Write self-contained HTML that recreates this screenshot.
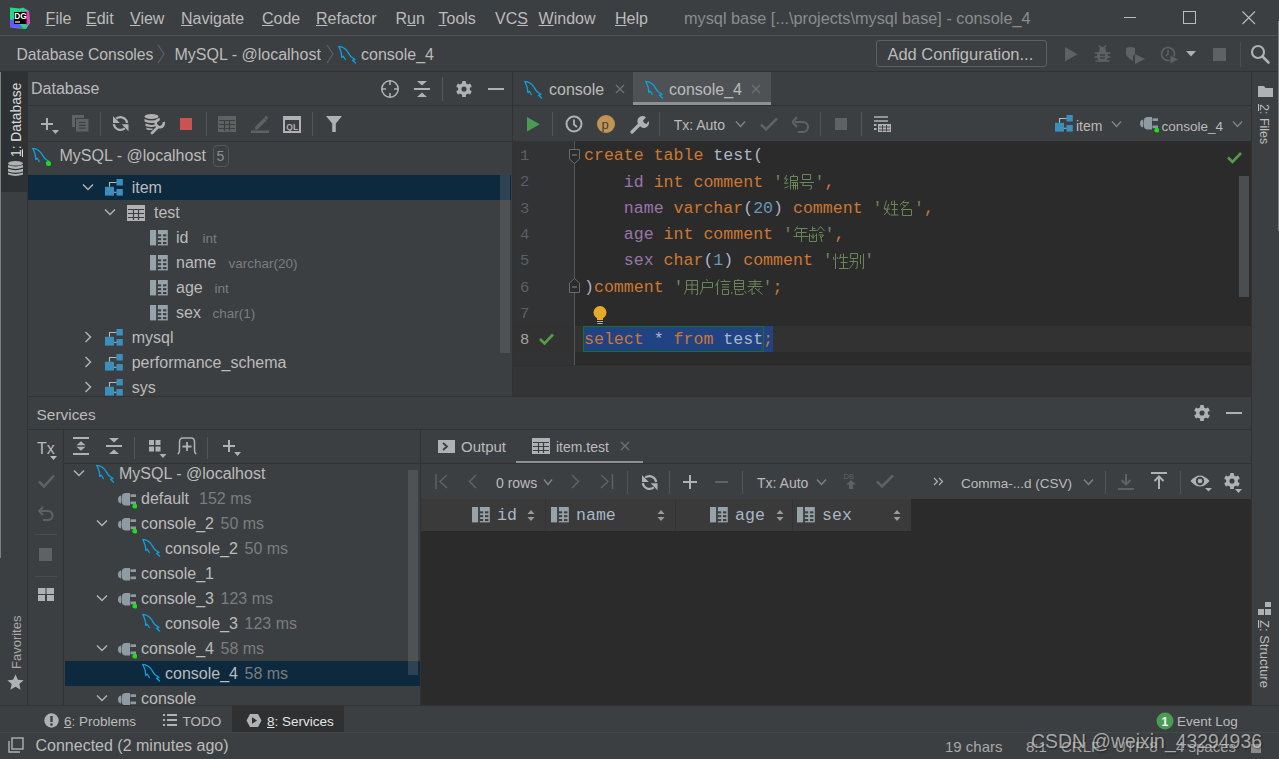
<!DOCTYPE html><html><head><meta charset="utf-8"><style>
html,body{margin:0;padding:0;width:1279px;height:759px;overflow:hidden;background:#3c3f41}
body>div,body>span,body>svg{position:absolute;display:block}
span{white-space:nowrap;line-height:1}
span span{white-space:inherit}
</style></head><body>
<div style="left:0px;top:0px;width:1279px;height:759px;background:#3c3f41;"></div>
<div style="left:0px;top:35px;width:1279px;height:1px;background:#4e5254;"></div>
<svg style="left:8px;top:6px;" width="24" height="24" viewBox="0 0 24 24"><path d="M2 1.5 L12 2.5 L15 1.5 L21 5 L22 17 L18 23 L6 22 L2 21Z" fill="#21d789"/><path d="M13 5 L21 5.5 L21.5 18 L18 19.5Z" fill="#fc33c8"/><path d="M2 14 L7 13 L15 22 L2 21.5Z" fill="#6b57ff"/><rect x="6" y="6" width="12.5" height="12" fill="#000"/><text x="6.2" y="12.6" font-size="8.4" font-family="Liberation Sans" font-weight="bold" fill="#fff">DG</text><rect x="7" y="15.3" width="5" height="1.4" fill="#d0d0d0"/></svg>
<span style="left:45.6px;top:10.86px;font-size:16px;color:#bbbbbb;font-family:'Liberation Sans',sans-serif;"><u>F</u>ile</span>
<span style="left:86px;top:10.86px;font-size:16px;color:#bbbbbb;font-family:'Liberation Sans',sans-serif;"><u>E</u>dit</span>
<span style="left:130px;top:10.86px;font-size:16px;color:#bbbbbb;font-family:'Liberation Sans',sans-serif;"><u>V</u>iew</span>
<span style="left:181px;top:10.86px;font-size:16px;color:#bbbbbb;font-family:'Liberation Sans',sans-serif;"><u>N</u>avigate</span>
<span style="left:262px;top:10.86px;font-size:16px;color:#bbbbbb;font-family:'Liberation Sans',sans-serif;"><u>C</u>ode</span>
<span style="left:316px;top:10.86px;font-size:16px;color:#bbbbbb;font-family:'Liberation Sans',sans-serif;"><u>R</u>efactor</span>
<span style="left:395.5px;top:10.86px;font-size:16px;color:#bbbbbb;font-family:'Liberation Sans',sans-serif;">R<u>u</u>n</span>
<span style="left:438.5px;top:10.86px;font-size:16px;color:#bbbbbb;font-family:'Liberation Sans',sans-serif;"><u>T</u>ools</span>
<span style="left:495px;top:10.86px;font-size:16px;color:#bbbbbb;font-family:'Liberation Sans',sans-serif;">VC<u>S</u></span>
<span style="left:538.6px;top:10.86px;font-size:16px;color:#bbbbbb;font-family:'Liberation Sans',sans-serif;"><u>W</u>indow</span>
<span style="left:615px;top:10.86px;font-size:16px;color:#bbbbbb;font-family:'Liberation Sans',sans-serif;"><u>H</u>elp</span>
<span style="left:684px;top:9.50px;font-size:16.3px;color:#8a8c8e;font-family:'Liberation Sans',sans-serif;">mysql base [...\projects\mysql base] - console_4</span>
<div style="left:1124px;top:17px;width:12px;height:1px;background:#bbbbbb;"></div>
<svg style="left:1183px;top:11px;" width="14" height="14" viewBox="0 0 14 14"><rect x="0.5" y="0.5" width="12" height="12" fill="none" stroke="#bbbbbb" stroke-width="1"/></svg>
<svg style="left:1242px;top:11px;" width="14" height="14" viewBox="0 0 14 14"><path d="M0.5 0.5 L13 13 M13 0.5 L0.5 13" stroke="#bbbbbb" stroke-width="1.1"/></svg>
<div style="left:0px;top:71px;width:1279px;height:1px;background:#323232;"></div>
<span style="left:16.5px;top:47.01px;font-size:15.7px;color:#bbbbbb;font-family:'Liberation Sans',sans-serif;">Database Consoles</span>
<svg style="left:157px;top:44px;" width="9" height="20" viewBox="0 0 9 20"><path d="M1 1 L7 10 L1 19" fill="none" stroke="#5e6164" stroke-width="1.2"/></svg>
<span style="left:174.5px;top:46.76px;font-size:16px;color:#bbbbbb;font-family:'Liberation Sans',sans-serif;">MySQL - @localhost</span>
<svg style="left:326px;top:44px;" width="9" height="20" viewBox="0 0 9 20"><path d="M1 1 L7 10 L1 19" fill="none" stroke="#5e6164" stroke-width="1.2"/></svg>
<svg style="left:338px;top:45px;" width="19" height="19" viewBox="0 0 19 19"><path d="M0.8 1.3 C4 1.6 7.5 3.5 9.5 6.5 C11 9 12 11.5 14.5 12.8 L17 14.5 M0.8 1.3 C2 4.5 3.5 6.5 3.5 9.5 L3.8 12.5 L5.3 11.2 L7.3 14.5 M17 14.5 L14.5 15.3 L17.5 18" fill="none" stroke="#0aa5e8" stroke-width="1.25" stroke-linecap="round" stroke-linejoin="round"/></svg>
<span style="left:361px;top:46.76px;font-size:16px;color:#bbbbbb;font-family:'Liberation Sans',sans-serif;">console_4</span>
<div style="left:876px;top:40px;width:171px;height:27px;background:transparent;border:1px solid #5e6060;border-radius:3px;box-sizing:border-box"></div>
<span style="left:887.4px;top:46.03px;font-size:16.5px;color:#bbbbbb;font-family:'Liberation Sans',sans-serif;">Add Configuration...</span>
<svg style="left:1065px;top:47px;" width="13" height="15" viewBox="0 0 13 15"><path d="M0 0 L12.5 7.3 L0 14.6Z" fill="#5f6163"/></svg>
<svg style="left:1094px;top:45px;" width="17" height="18" viewBox="0 0 17 18"><circle cx="8.5" cy="5" r="3.2" fill="#5f6163"/><ellipse cx="8.5" cy="11" rx="5.6" ry="6" fill="#5f6163"/><path d="M0.5 8 H16.5 M0.5 12 H16.5 M1.5 16 H15.5 M5 0.5 L6.8 2.5 M12 0.5 L10.2 2.5" stroke="#5f6163" stroke-width="1.6"/><path d="M6 10 H11 M6 13 H11" stroke="#3c3f41" stroke-width="1.3"/></svg>
<svg style="left:1126px;top:46px;" width="20" height="19" viewBox="0 0 20 19"><path d="M0 2 Q4 0 9 2 V8 L7 10 V15 Q3 13 0 9Z" fill="#5f6163"/><path d="M9 8 L19 13 L9 18Z" fill="#5f6163"/></svg>
<svg style="left:1160px;top:46px;" width="20" height="19" viewBox="0 0 20 19"><circle cx="8" cy="8" r="6.5" fill="none" stroke="#5f6163" stroke-width="1.6"/><path d="M8 4 V8 L6 10" stroke="#5f6163" stroke-width="1.4" fill="none"/><path d="M10 9 L19 13.5 L10 18Z" fill="#5f6163" stroke="#3c3f41" stroke-width="1"/></svg>
<svg style="left:1186px;top:51px;" width="11" height="6" viewBox="0 0 11 6"><path d="M0 0 H10 L5 5.5Z" fill="#afb1b3"/></svg>
<div style="left:1213px;top:48px;width:13px;height:13px;background:#5f6163;"></div>
<div style="left:1240px;top:42px;width:1px;height:25px;background:#4b4e50;"></div>
<svg style="left:1250px;top:44px;" width="21" height="21" viewBox="0 0 21 21"><circle cx="8" cy="8" r="6" fill="none" stroke="#afb1b3" stroke-width="2.2"/><path d="M12.5 12.5 L18.5 18.5" stroke="#afb1b3" stroke-width="2.6" stroke-linecap="round"/></svg>
<div style="left:27px;top:72px;width:1px;height:633px;background:#323232;"></div>
<div style="left:0px;top:72px;width:27px;height:120px;background:#2f3234;"></div>
<div style="left:0px;top:72px;width:1px;height:486px;background:#7d7f80;"></div>
<div style="left:1278px;top:21px;width:1px;height:210px;background:#7d7f80;"></div>
<span style="left:0px;top:-11.68px;font-size:13.8px;color:#dcdcdc;font-family:'Liberation Sans',sans-serif;transform-origin:0 0;transform:translate(10px,157px) rotate(-90deg);top:0;left:0"><u>1</u>: Database</span>
<svg style="left:8px;top:161px;" width="15" height="16" viewBox="0 0 15 16"><ellipse cx="7.5" cy="2.3" rx="7.5" ry="2.3" fill="#afb1b3"/><path d="M0 4 Q7.5 6.8 15 4 V6.6 Q7.5 9.4 0 6.6Z M0 7.8 Q7.5 10.6 15 7.8 V10.4 Q7.5 13.2 0 10.4Z M0 11.6 Q7.5 14.4 15 11.6 V13.6 Q7.5 16.4 0 13.6Z" fill="#afb1b3"/></svg>
<span style="left:0px;top:-11.00px;font-size:13px;color:#a8a8a8;font-family:'Liberation Sans',sans-serif;transform-origin:0 0;transform:translate(10px,669px) rotate(-90deg);top:0;left:0">Favorites</span>
<svg style="left:7px;top:674px;" width="17" height="17" viewBox="0 0 17 17"><path d="M8.5 0.5 L10.9 5.8 L16.6 6.3 L12.3 10.1 L13.6 15.8 L8.5 12.8 L3.4 15.8 L4.7 10.1 L0.4 6.3 L6.1 5.8Z" fill="#afb1b3"/></svg>
<div style="left:1251px;top:72px;width:1px;height:633px;background:#323232;"></div>
<svg style="left:1258px;top:86px;" width="16" height="12" viewBox="0 0 16 12"><path d="M0 0 H6 L7.5 2 H15 V11 H0Z" fill="#afb1b3"/></svg>
<span style="left:0px;top:-10.58px;font-size:12.5px;color:#bbbbbb;font-family:'Liberation Sans',sans-serif;transform-origin:0 0;transform:translate(1270px,104px) rotate(90deg);top:0;left:0"><u>2</u>: Files</span>
<svg style="left:1258px;top:602px;" width="14" height="13" viewBox="0 0 14 13"><rect x="7" y="0" width="6" height="5" fill="#afb1b3"/><rect x="0" y="7" width="6" height="6" fill="#afb1b3"/><rect x="7" y="7" width="6" height="6" fill="#afb1b3"/></svg>
<span style="left:0px;top:-11.00px;font-size:13px;color:#bbbbbb;font-family:'Liberation Sans',sans-serif;transform-origin:0 0;transform:translate(1271px,620px) rotate(90deg);top:0;left:0"><u>Z</u>: Structure</span>
<div style="left:28px;top:105px;width:484px;height:1px;background:#323232;"></div>
<div style="left:28px;top:141px;width:484px;height:1px;background:#323232;"></div>
<div style="left:512px;top:72px;width:1px;height:324px;background:#323232;"></div>
<span style="left:31px;top:81.46px;font-size:16px;color:#bbbbbb;font-family:'Liberation Sans',sans-serif;">Database</span>
<svg style="left:380px;top:79px;" width="20" height="20" viewBox="0 0 20 20"><circle cx="10" cy="10" r="8.2" fill="none" stroke="#afb1b3" stroke-width="1.6"/><path d="M10 1.5 V6 M10 14 V18.5 M1.5 10 H6 M14 10 H18.5" stroke="#afb1b3" stroke-width="1.6"/></svg>
<svg style="left:414px;top:80px;" width="16" height="18" viewBox="0 0 16 18"><path d="M3 1 H13 L8 5.5Z M3 17 H13 L8 12.5Z" fill="#afb1b3"/><rect x="0" y="8" width="16" height="2" fill="#afb1b3"/></svg>
<div style="left:442px;top:77px;width:1px;height:24px;background:#515658;"></div>
<svg style="left:455px;top:80px;" width="18" height="18" viewBox="0 0 18 18"><circle cx="9" cy="9" r="5.92" fill="#afb1b3"/><rect x="7.1" y="1" width="3.8" height="8" rx="0.6" fill="#afb1b3" transform="rotate(0 9 9)"/><rect x="7.1" y="1" width="3.8" height="8" rx="0.6" fill="#afb1b3" transform="rotate(60 9 9)"/><rect x="7.1" y="1" width="3.8" height="8" rx="0.6" fill="#afb1b3" transform="rotate(120 9 9)"/><rect x="7.1" y="1" width="3.8" height="8" rx="0.6" fill="#afb1b3" transform="rotate(180 9 9)"/><rect x="7.1" y="1" width="3.8" height="8" rx="0.6" fill="#afb1b3" transform="rotate(240 9 9)"/><rect x="7.1" y="1" width="3.8" height="8" rx="0.6" fill="#afb1b3" transform="rotate(300 9 9)"/><circle cx="9" cy="9" r="2.56" fill="#3c3f41"/></svg>
<div style="left:488px;top:88px;width:16px;height:2px;background:#afb1b3;"></div>
<svg style="left:40px;top:117px;" width="20" height="19" viewBox="0 0 20 19"><path d="M7 1 V13 M1 7 H13" stroke="#afb1b3" stroke-width="2"/><path d="M12 13 H19 L15.5 17Z" fill="#afb1b3"/></svg>
<svg style="left:72px;top:115px;" width="17" height="17" viewBox="0 0 17 17"><path d="M0 12 V0 H12 V3 H3 V12Z" fill="#5f6163"/><rect x="4" y="4" width="12.5" height="12.5" fill="#5f6163"/><path d="M7 7.5 H13.5 M7 10.3 H13.5 M7 13.1 H13.5" stroke="#3c3f41" stroke-width="1.2"/></svg>
<div style="left:100px;top:112px;width:1px;height:24px;background:#515658;"></div>
<svg style="left:112px;top:115px;" width="17" height="17" viewBox="0 0 17 17"><path d="M15.2 8 A6.8 6.6 0 0 0 4.2 3.6 M1.8 9.2 A6.8 6.6 0 0 0 12.8 13.4" fill="none" stroke="#afb1b3" stroke-width="2.2"/><path d="M1 1.2 V8 H7.8Z M16.5 16.3 V9.2 H9.7Z" fill="#afb1b3"/></svg>
<svg style="left:144px;top:114px;" width="21" height="21" viewBox="0 0 21 21"><ellipse cx="7.5" cy="2.5" rx="7" ry="2.5" fill="#afb1b3"/><path d="M0.5 5 Q7.5 8 14.5 5 V7.5 Q7.5 10.5 0.5 7.5Z M1.5 9.5 Q7.5 12 12 10 V12 Q7.5 14 1.5 12Z M2.5 13.5 Q6 15 8.5 14.2 V15.8 Q6 16.5 2.5 15.5Z" fill="#afb1b3"/><path d="M8 19 L14 13" stroke="#afb1b3" stroke-width="2.8" stroke-linecap="round"/><path d="M19.6 8 A4 4 0 1 1 15.8 5.2" fill="none" stroke="#afb1b3" stroke-width="2.6"/></svg>
<div style="left:180px;top:118px;width:12px;height:12px;background:#c75450;"></div>
<div style="left:206px;top:112px;width:1px;height:24px;background:#515658;"></div>
<svg style="left:218px;top:116px;" width="18" height="16" viewBox="0 0 18 16"><rect x="0" y="0" width="18" height="16" fill="#5f6163"/><path d="M1 4.5 H17 M1 8.5 H17 M1 12.5 H17 M6.5 4 V15 M11.5 4 V15" stroke="#3c3f41" stroke-width="1.2"/></svg>
<svg style="left:251px;top:115px;" width="18" height="18" viewBox="0 0 18 18"><path d="M4 12 L13 3 L15.5 5.5 L6.5 14.5 L4 14.5Z" fill="#5f6163"/><path d="M14 1.5 L16.5 4" stroke="#5f6163" stroke-width="2.5"/><rect x="0" y="15.5" width="18" height="2.5" fill="#5f6163"/></svg>
<svg style="left:283px;top:116px;" width="18" height="17" viewBox="0 0 18 17"><rect x="0" y="0" width="18" height="17" fill="#afb1b3"/><rect x="2" y="4" width="14" height="11" fill="#3c3f41"/><text x="3.3" y="13.5" font-size="8.5" font-family="Liberation Sans" font-weight="bold" fill="#afb1b3">QL</text></svg>
<div style="left:312px;top:112px;width:1px;height:24px;background:#515658;"></div>
<svg style="left:326px;top:116px;" width="16" height="16" viewBox="0 0 16 16"><path d="M0 0 H16 L9.8 7.5 V16 H6.2 V7.5Z" fill="#afb1b3"/></svg>
<div style="left:28px;top:175px;width:483px;height:25px;background:#0d293e;"></div>
<svg style="left:32px;top:147px;" width="19" height="19" viewBox="0 0 19 19"><path d="M0.8 1.3 C4 1.6 7.5 3.5 9.5 6.5 C11 9 12 11.5 14.5 12.8 L17 14.5 M0.8 1.3 C2 4.5 3.5 6.5 3.5 9.5 L3.8 12.5 L5.3 11.2 L7.3 14.5 M17 14.5 L14.5 15.3 L17.5 18" fill="none" stroke="#0aa5e8" stroke-width="1.25" stroke-linecap="round" stroke-linejoin="round"/><circle cx="16.5" cy="16.5" r="2.5" fill="#17e117"/></svg>
<span style="left:59.5px;top:148.46px;font-size:16px;color:#bbbbbb;font-family:'Liberation Sans',sans-serif;">MySQL - @localhost</span>
<div style="left:213px;top:145px;width:16px;height:22px;background:transparent;border:1px solid #55585a;border-radius:4px;box-sizing:border-box"></div>
<span style="left:216.5px;top:149.15px;font-size:14px;color:#8c8c8c;font-family:'Liberation Sans',sans-serif;">5</span>
<svg style="left:82.0px;top:183px;" width="12" height="8" viewBox="0 0 12 8"><path d="M1 1.5 L6.0 6.5 L11 1.5" fill="none" stroke="#afb1b3" stroke-width="1.5"/></svg>
<svg style="left:105px;top:179px;" width="18" height="17" viewBox="0 0 18 17"><rect x="11.5" y="0" width="6.3" height="6.5" fill="#3a8fbd"/><rect x="0" y="7.8" width="9" height="8.8" fill="#3a8fbd"/><rect x="11.5" y="10" width="6.3" height="6.6" fill="#3a8fbd"/><path d="M4.5 7.8 V3.5 H11.5 M9 13.3 H11.5" stroke="#b4b8bc" stroke-width="1.1" fill="none"/></svg>
<span style="left:131.7px;top:180.46px;font-size:16px;color:#bbbbbb;font-family:'Liberation Sans',sans-serif;">item</span>
<svg style="left:104.0px;top:208px;" width="12" height="8" viewBox="0 0 12 8"><path d="M1 1.5 L6.0 6.5 L11 1.5" fill="none" stroke="#afb1b3" stroke-width="1.5"/></svg>
<svg style="left:127px;top:205px;" width="18" height="16" viewBox="0 0 18 16"><rect x="0" y="0" width="18" height="16" fill="#afb1b3"/><path d="M1 4.5 H17 M1 8.5 H17 M1 12.5 H17 M6.5 4 V15 M11.5 4 V15" stroke="#3c3f41" stroke-width="1.2"/></svg>
<span style="left:154px;top:205.46px;font-size:16px;color:#bbbbbb;font-family:'Liberation Sans',sans-serif;">test</span>
<svg style="left:150px;top:230px;" width="18" height="16" viewBox="0 0 18 16"><rect x="0" y="0" width="6.1" height="15.4" fill="#97a3ab"/><rect x="7.9" y="0" width="9.9" height="15.4" fill="#97a3ab"/><rect x="7.6" y="4.3" width="3.6" height="2.1" fill="#3c3f41"/><rect x="13" y="4.3" width="3.4" height="2.1" fill="#3c3f41"/><rect x="7.6" y="8.1" width="3.6" height="2.1" fill="#3c3f41"/><rect x="13" y="8.1" width="3.4" height="2.1" fill="#3c3f41"/><rect x="7.6" y="12" width="3.6" height="2.1" fill="#3c3f41"/><rect x="13" y="12" width="3.4" height="2.1" fill="#3c3f41"/></svg>
<span style="left:176px;top:230.46px;font-size:16px;color:#bbbbbb;font-family:'Liberation Sans',sans-serif;">id</span>
<span style="left:202.5px;top:231.87px;font-size:13.5px;color:#7b7d7f;font-family:'Liberation Sans',sans-serif;">int</span>
<svg style="left:150px;top:255px;" width="18" height="16" viewBox="0 0 18 16"><rect x="0" y="0" width="6.1" height="15.4" fill="#97a3ab"/><rect x="7.9" y="0" width="9.9" height="15.4" fill="#97a3ab"/><rect x="7.6" y="4.3" width="3.6" height="2.1" fill="#3c3f41"/><rect x="13" y="4.3" width="3.4" height="2.1" fill="#3c3f41"/><rect x="7.6" y="8.1" width="3.6" height="2.1" fill="#3c3f41"/><rect x="13" y="8.1" width="3.4" height="2.1" fill="#3c3f41"/><rect x="7.6" y="12" width="3.6" height="2.1" fill="#3c3f41"/><rect x="13" y="12" width="3.4" height="2.1" fill="#3c3f41"/></svg>
<span style="left:176px;top:255.46px;font-size:16px;color:#bbbbbb;font-family:'Liberation Sans',sans-serif;">name</span>
<span style="left:228.5px;top:256.87px;font-size:13.5px;color:#7b7d7f;font-family:'Liberation Sans',sans-serif;">varchar(20)</span>
<svg style="left:150px;top:280px;" width="18" height="16" viewBox="0 0 18 16"><rect x="0" y="0" width="6.1" height="15.4" fill="#97a3ab"/><rect x="7.9" y="0" width="9.9" height="15.4" fill="#97a3ab"/><rect x="7.6" y="4.3" width="3.6" height="2.1" fill="#3c3f41"/><rect x="13" y="4.3" width="3.4" height="2.1" fill="#3c3f41"/><rect x="7.6" y="8.1" width="3.6" height="2.1" fill="#3c3f41"/><rect x="13" y="8.1" width="3.4" height="2.1" fill="#3c3f41"/><rect x="7.6" y="12" width="3.6" height="2.1" fill="#3c3f41"/><rect x="13" y="12" width="3.4" height="2.1" fill="#3c3f41"/></svg>
<span style="left:176px;top:280.46px;font-size:16px;color:#bbbbbb;font-family:'Liberation Sans',sans-serif;">age</span>
<span style="left:214.5px;top:281.87px;font-size:13.5px;color:#7b7d7f;font-family:'Liberation Sans',sans-serif;">int</span>
<svg style="left:150px;top:305px;" width="18" height="16" viewBox="0 0 18 16"><rect x="0" y="0" width="6.1" height="15.4" fill="#97a3ab"/><rect x="7.9" y="0" width="9.9" height="15.4" fill="#97a3ab"/><rect x="7.6" y="4.3" width="3.6" height="2.1" fill="#3c3f41"/><rect x="13" y="4.3" width="3.4" height="2.1" fill="#3c3f41"/><rect x="7.6" y="8.1" width="3.6" height="2.1" fill="#3c3f41"/><rect x="13" y="8.1" width="3.4" height="2.1" fill="#3c3f41"/><rect x="7.6" y="12" width="3.6" height="2.1" fill="#3c3f41"/><rect x="13" y="12" width="3.4" height="2.1" fill="#3c3f41"/></svg>
<span style="left:176px;top:305.46px;font-size:16px;color:#bbbbbb;font-family:'Liberation Sans',sans-serif;">sex</span>
<span style="left:212.5px;top:306.87px;font-size:13.5px;color:#7b7d7f;font-family:'Liberation Sans',sans-serif;">char(1)</span>
<svg style="left:84px;top:331px;" width="8" height="12" viewBox="0 0 8 12"><path d="M1.5 1 L6.5 6 L1.5 11" fill="none" stroke="#afb1b3" stroke-width="1.5"/></svg>
<svg style="left:105px;top:329px;" width="18" height="17" viewBox="0 0 18 17"><rect x="11.5" y="0" width="6.3" height="6.5" fill="#3a8fbd"/><rect x="0" y="7.8" width="9" height="8.8" fill="#3a8fbd"/><rect x="11.5" y="10" width="6.3" height="6.6" fill="#3a8fbd"/><path d="M4.5 7.8 V3.5 H11.5 M9 13.3 H11.5" stroke="#b4b8bc" stroke-width="1.1" fill="none"/></svg>
<span style="left:131.7px;top:330.46px;font-size:16px;color:#bbbbbb;font-family:'Liberation Sans',sans-serif;">mysql</span>
<svg style="left:84px;top:356px;" width="8" height="12" viewBox="0 0 8 12"><path d="M1.5 1 L6.5 6 L1.5 11" fill="none" stroke="#afb1b3" stroke-width="1.5"/></svg>
<svg style="left:105px;top:354px;" width="18" height="17" viewBox="0 0 18 17"><rect x="11.5" y="0" width="6.3" height="6.5" fill="#3a8fbd"/><rect x="0" y="7.8" width="9" height="8.8" fill="#3a8fbd"/><rect x="11.5" y="10" width="6.3" height="6.6" fill="#3a8fbd"/><path d="M4.5 7.8 V3.5 H11.5 M9 13.3 H11.5" stroke="#b4b8bc" stroke-width="1.1" fill="none"/></svg>
<span style="left:131.7px;top:355.46px;font-size:16px;color:#bbbbbb;font-family:'Liberation Sans',sans-serif;">performance_schema</span>
<svg style="left:84px;top:381px;" width="8" height="12" viewBox="0 0 8 12"><path d="M1.5 1 L6.5 6 L1.5 11" fill="none" stroke="#afb1b3" stroke-width="1.5"/></svg>
<svg style="left:105px;top:379px;" width="18" height="17" viewBox="0 0 18 17"><rect x="11.5" y="0" width="6.3" height="6.5" fill="#3a8fbd"/><rect x="0" y="7.8" width="9" height="8.8" fill="#3a8fbd"/><rect x="11.5" y="10" width="6.3" height="6.6" fill="#3a8fbd"/><path d="M4.5 7.8 V3.5 H11.5 M9 13.3 H11.5" stroke="#b4b8bc" stroke-width="1.1" fill="none"/></svg>
<span style="left:131.7px;top:380.46px;font-size:16px;color:#bbbbbb;font-family:'Liberation Sans',sans-serif;">sys</span>
<div style="left:500px;top:175px;width:10px;height:178px;background:rgba(128,132,136,0.28);"></div>
<div style="left:513px;top:105px;width:738px;height:1px;background:#323232;"></div>
<div style="left:513px;top:141px;width:738px;height:255px;background:#2b2b2b;"></div>
<div style="left:633px;top:72px;width:138px;height:33px;background:#4e5254;"></div>
<div style="left:633px;top:102px;width:138px;height:3px;background:#8d9194;"></div>
<svg style="left:524px;top:80px;" width="19" height="19" viewBox="0 0 19 19"><path d="M0.8 1.3 C4 1.6 7.5 3.5 9.5 6.5 C11 9 12 11.5 14.5 12.8 L17 14.5 M0.8 1.3 C2 4.5 3.5 6.5 3.5 9.5 L3.8 12.5 L5.3 11.2 L7.3 14.5 M17 14.5 L14.5 15.3 L17.5 18" fill="none" stroke="#0aa5e8" stroke-width="1.25" stroke-linecap="round" stroke-linejoin="round"/></svg>
<span style="left:549px;top:82.46px;font-size:16px;color:#bbbbbb;font-family:'Liberation Sans',sans-serif;">console</span>
<svg style="left:615px;top:84px;" width="10" height="10" viewBox="0 0 10 10"><path d="M1 1 L9 9 M9 1 L1 9" stroke="#6e7072" stroke-width="1.3"/></svg>
<svg style="left:645px;top:80px;" width="19" height="19" viewBox="0 0 19 19"><path d="M0.8 1.3 C4 1.6 7.5 3.5 9.5 6.5 C11 9 12 11.5 14.5 12.8 L17 14.5 M0.8 1.3 C2 4.5 3.5 6.5 3.5 9.5 L3.8 12.5 L5.3 11.2 L7.3 14.5 M17 14.5 L14.5 15.3 L17.5 18" fill="none" stroke="#0aa5e8" stroke-width="1.25" stroke-linecap="round" stroke-linejoin="round"/></svg>
<span style="left:669px;top:82.46px;font-size:16px;color:#bbbbbb;font-family:'Liberation Sans',sans-serif;">console_4</span>
<svg style="left:751px;top:84px;" width="10" height="10" viewBox="0 0 10 10"><path d="M1 1 L9 9 M9 1 L1 9" stroke="#6e7072" stroke-width="1.3"/></svg>
<svg style="left:527px;top:117px;" width="13" height="15" viewBox="0 0 13 15"><path d="M0 0 L12.8 7.3 L0 14.6Z" fill="#499c54"/></svg>
<div style="left:552px;top:112px;width:1px;height:24px;background:#515658;"></div>
<svg style="left:565px;top:115px;" width="18" height="18" viewBox="0 0 18 18"><circle cx="9" cy="9" r="7.5" fill="none" stroke="#afb1b3" stroke-width="2"/><path d="M9 4.5 V9.5 L12 12" fill="none" stroke="#afb1b3" stroke-width="1.8"/></svg>
<svg style="left:597px;top:115px;" width="18" height="18" viewBox="0 0 18 18"><circle cx="9" cy="9" r="9" fill="#c09553"/><text x="4.5" y="14" font-size="13" font-family="Liberation Sans" fill="#3c3f41">p</text></svg>
<svg style="left:630px;top:115px;" width="19" height="19" viewBox="0 0 19 19"><path d="M2 17 L10 9" stroke="#afb1b3" stroke-width="3.2" stroke-linecap="round"/><path d="M9 10 A5 5 0 0 1 16 2.5 L13 5.5 L14 8 L16.5 9 L18.5 6 A5 5 0 0 1 11 12Z" fill="#afb1b3"/></svg>
<div style="left:659px;top:112px;width:1px;height:24px;background:#515658;"></div>
<span style="left:673.7px;top:118.15px;font-size:14px;color:#bbbbbb;font-family:'Liberation Sans',sans-serif;">Tx: Auto</span>
<svg style="left:734.5px;top:120px;" width="11" height="8" viewBox="0 0 11 8"><path d="M1 1.5 L5.5 6.5 L10 1.5" fill="none" stroke="#7e8083" stroke-width="1.5"/></svg>
<svg style="left:760px;top:117px;" width="18" height="15" viewBox="0 0 18 15"><path d="M1 7.5 L6 12.5 L17 1.5" fill="none" stroke="#5f6163" stroke-width="2.6"/></svg>
<svg style="left:792px;top:116px;" width="18" height="17" viewBox="0 0 18 17"><path d="M3 6 H11 A5 5 0 0 1 11 16 H6" fill="none" stroke="#5f6163" stroke-width="2.2"/><path d="M5 1 L0.5 6 L5 11" fill="none" stroke="#5f6163" stroke-width="2.2"/></svg>
<div style="left:820px;top:112px;width:1px;height:24px;background:#515658;"></div>
<div style="left:835px;top:118px;width:12px;height:12px;background:#5f6163;"></div>
<div style="left:861px;top:112px;width:1px;height:24px;background:#515658;"></div>
<svg style="left:873px;top:116px;" width="19" height="17" viewBox="0 0 19 17"><path d="M1 1 H15 M1 5 H15" stroke="#afb1b3" stroke-width="1.6"/><rect x="1" y="8" width="2.5" height="2" fill="#afb1b3"/><rect x="1" y="12" width="2.5" height="2" fill="#afb1b3"/><rect x="5" y="8" width="13" height="8" fill="#afb1b3"/><path d="M6 11 H17 M6 14 H17 M9.5 9 V15.5 M13.5 9 V15.5" stroke="#3c3f41" stroke-width="0.9"/></svg>
<svg style="left:1055px;top:115px;" width="18" height="17" viewBox="0 0 18 17"><rect x="11.5" y="0" width="6.3" height="6.5" fill="#3a8fbd"/><rect x="0" y="7.8" width="9" height="8.8" fill="#3a8fbd"/><rect x="11.5" y="10" width="6.3" height="6.6" fill="#3a8fbd"/><path d="M4.5 7.8 V3.5 H11.5 M9 13.3 H11.5" stroke="#b4b8bc" stroke-width="1.1" fill="none"/></svg>
<span style="left:1076px;top:119.15px;font-size:14px;color:#bbbbbb;font-family:'Liberation Sans',sans-serif;">item</span>
<svg style="left:1110.5px;top:120px;" width="11" height="8" viewBox="0 0 11 8"><path d="M1 1.5 L5.5 6.5 L10 1.5" fill="none" stroke="#7e8083" stroke-width="1.5"/></svg>
<svg style="left:1140px;top:116px;" width="19" height="17" viewBox="0 0 19 17"><path d="M3 3.5 Q0 4 0 7.5 Q0 11 3 11.5Z" fill="#8f9ba3"/><path d="M7 1 H12 V13.5 H7 Q3.5 13.5 3.5 7.25 Q3.5 1 7 1Z" fill="#8f9ba3"/><rect x="12.5" y="2.3" width="5.5" height="2.7" fill="#8f9ba3"/><rect x="12.5" y="9.5" width="5.5" height="2.7" fill="#8f9ba3"/><circle cx="16.8" cy="14.2" r="2.4" fill="#17e117"/></svg>
<span style="left:1161.5px;top:119.57px;font-size:13.5px;color:#bbbbbb;font-family:'Liberation Sans',sans-serif;">console_4</span>
<svg style="left:1231.5px;top:120px;" width="11" height="8" viewBox="0 0 11 8"><path d="M1 1.5 L5.5 6.5 L10 1.5" fill="none" stroke="#7e8083" stroke-width="1.5"/></svg>
<div style="left:513px;top:141px;width:62px;height:255px;background:#313335;"></div>
<div style="left:513px;top:326px;width:738px;height:26px;background:#323232;"></div>
<div style="left:574px;top:141px;width:1px;height:224px;background:#555555;"></div>
<span style="left:520px;top:149.12px;font-size:15.5px;color:#5b6066;font-family:'Liberation Mono',monospace;">1</span>
<span style="left:520px;top:175.41px;font-size:15.5px;color:#5b6066;font-family:'Liberation Mono',monospace;">2</span>
<span style="left:520px;top:201.70px;font-size:15.5px;color:#5b6066;font-family:'Liberation Mono',monospace;">3</span>
<span style="left:520px;top:227.99px;font-size:15.5px;color:#5b6066;font-family:'Liberation Mono',monospace;">4</span>
<span style="left:520px;top:254.28px;font-size:15.5px;color:#5b6066;font-family:'Liberation Mono',monospace;">5</span>
<span style="left:520px;top:280.57px;font-size:15.5px;color:#5b6066;font-family:'Liberation Mono',monospace;">6</span>
<span style="left:520px;top:306.86px;font-size:15.5px;color:#5b6066;font-family:'Liberation Mono',monospace;">7</span>
<span style="left:520px;top:333.15px;font-size:15.5px;color:#a4a3a3;font-family:'Liberation Mono',monospace;">8</span>
<svg style="left:569px;top:149px;" width="12" height="16" viewBox="0 0 12 16"><path d="M0.5 0.5 H10.5 V10 L5.5 14.5 L0.5 10Z" fill="#2b2b2b" stroke="#6b6b6b" stroke-width="1"/><path d="M3 6 H8" stroke="#8a8a8a" stroke-width="1"/></svg>
<svg style="left:569px;top:277px;" width="12" height="16" viewBox="0 0 12 16"><path d="M0.5 15.5 H10.5 V6 L5.5 1.5 L0.5 6Z" fill="#2b2b2b" stroke="#6b6b6b" stroke-width="1"/><path d="M3 10 H8" stroke="#8a8a8a" stroke-width="1"/></svg>
<svg style="left:539px;top:333px;" width="15" height="12" viewBox="0 0 15 12"><path d="M1 6 L5.5 10.5 L14 1.5" fill="none" stroke="#559c47" stroke-width="2.6"/></svg>
<span style="left:584.0px;top:148.29px;font-size:16.58px;color:#a9b7c6;font-family:'Liberation Mono',monospace;white-space:pre"><span style="color:#cc7832">create table </span></span>
<span style="left:713.35px;top:148.29px;font-size:16.58px;color:#a9b7c6;font-family:'Liberation Mono',monospace;white-space:pre"><span style="color:#a9b7c6">test(</span></span>
<span style="left:584.0px;top:174.58px;font-size:16.58px;color:#a9b7c6;font-family:'Liberation Mono',monospace;white-space:pre"><span style="color:#a9b7c6">    </span></span>
<span style="left:623.8px;top:174.58px;font-size:16.58px;color:#a9b7c6;font-family:'Liberation Mono',monospace;white-space:pre"><span style="color:#9876aa">id </span></span>
<span style="left:653.65px;top:174.58px;font-size:16.58px;color:#a9b7c6;font-family:'Liberation Mono',monospace;white-space:pre"><span style="color:#cc7832">int comment </span></span>
<span style="left:773.05px;top:174.58px;font-size:16.58px;color:#a9b7c6;font-family:'Liberation Mono',monospace;white-space:pre"><span style="color:#6a8759">'</span></span>
<svg style="left:783.0px;top:173.79px;" width="16" height="17" viewBox="0 0 16 17"><path d="M4 1 L1.5 5 L4.5 5 L1.5 9.5 L5.5 9 M1.5 14 L5.5 12.5 M10.5 0.5 V2 M7.5 2.5 H14.5 V6.5 H7.5 M7.5 2.5 V15.5 M8.5 8.5 H14.5 V15.5 M10.5 8.5 V15.5 M12.5 8.5 V15.5 M8.5 11.5 H14.5" fill="none" stroke="#6a8759" stroke-width="1"/></svg>
<svg style="left:798.8px;top:173.79px;" width="16" height="17" viewBox="0 0 16 17"><path d="M3.5 0.5 H11.5 V5.5 H3.5Z M0.5 8.5 H15 M4.5 8.5 L3.5 11.5 H12.5 V14.5 L10.5 15.5" fill="none" stroke="#6a8759" stroke-width="1"/></svg>
<span style="left:814.6px;top:174.58px;font-size:16.58px;color:#a9b7c6;font-family:'Liberation Mono',monospace;white-space:pre"><span style="color:#6a8759">'</span></span>
<span style="left:824.55px;top:174.58px;font-size:16.58px;color:#a9b7c6;font-family:'Liberation Mono',monospace;white-space:pre"><span style="color:#cc7832">,</span></span>
<span style="left:584.0px;top:200.87px;font-size:16.58px;color:#a9b7c6;font-family:'Liberation Mono',monospace;white-space:pre"><span style="color:#a9b7c6">    </span></span>
<span style="left:623.8px;top:200.87px;font-size:16.58px;color:#a9b7c6;font-family:'Liberation Mono',monospace;white-space:pre"><span style="color:#9876aa">name </span></span>
<span style="left:673.55px;top:200.87px;font-size:16.58px;color:#a9b7c6;font-family:'Liberation Mono',monospace;white-space:pre"><span style="color:#cc7832">varchar</span></span>
<span style="left:743.2px;top:200.87px;font-size:16.58px;color:#a9b7c6;font-family:'Liberation Mono',monospace;white-space:pre"><span style="color:#a9b7c6">(</span></span>
<span style="left:753.15px;top:200.87px;font-size:16.58px;color:#a9b7c6;font-family:'Liberation Mono',monospace;white-space:pre"><span style="color:#6897bb">20</span></span>
<span style="left:773.05px;top:200.87px;font-size:16.58px;color:#a9b7c6;font-family:'Liberation Mono',monospace;white-space:pre"><span style="color:#a9b7c6">) </span></span>
<span style="left:792.95px;top:200.87px;font-size:16.58px;color:#a9b7c6;font-family:'Liberation Mono',monospace;white-space:pre"><span style="color:#cc7832">comment </span></span>
<span style="left:872.55px;top:200.87px;font-size:16.58px;color:#a9b7c6;font-family:'Liberation Mono',monospace;white-space:pre"><span style="color:#6a8759">'</span></span>
<svg style="left:882.5px;top:200.08px;" width="16" height="17" viewBox="0 0 16 17"><path d="M3.5 0.5 L1 9 H7 M5.5 4 L4 12 L1 15 M1.5 8 L7 15 M9 1 L8 5 M8.5 4.5 H15 M11.5 0.5 V15 M9 9.5 H14.5 M7.5 15 H15.5" fill="none" stroke="#6a8759" stroke-width="1"/></svg>
<svg style="left:898.3px;top:200.08px;" width="16" height="17" viewBox="0 0 16 17"><path d="M6.5 0.5 L2 5 M5 2.5 H11 L3 10 M4.5 4.5 L7.5 6.5 M4.5 9.5 H13.5 V15.5 H4.5Z" fill="none" stroke="#6a8759" stroke-width="1"/></svg>
<span style="left:914.1px;top:200.87px;font-size:16.58px;color:#a9b7c6;font-family:'Liberation Mono',monospace;white-space:pre"><span style="color:#6a8759">'</span></span>
<span style="left:924.05px;top:200.87px;font-size:16.58px;color:#a9b7c6;font-family:'Liberation Mono',monospace;white-space:pre"><span style="color:#cc7832">,</span></span>
<span style="left:584.0px;top:227.16px;font-size:16.58px;color:#a9b7c6;font-family:'Liberation Mono',monospace;white-space:pre"><span style="color:#a9b7c6">    </span></span>
<span style="left:623.8px;top:227.16px;font-size:16.58px;color:#a9b7c6;font-family:'Liberation Mono',monospace;white-space:pre"><span style="color:#9876aa">age </span></span>
<span style="left:663.6px;top:227.16px;font-size:16.58px;color:#a9b7c6;font-family:'Liberation Mono',monospace;white-space:pre"><span style="color:#cc7832">int comment </span></span>
<span style="left:783.0px;top:227.16px;font-size:16.58px;color:#a9b7c6;font-family:'Liberation Mono',monospace;white-space:pre"><span style="color:#6a8759">'</span></span>
<svg style="left:792.95px;top:226.37px;" width="16" height="17" viewBox="0 0 16 17"><path d="M4.5 0.5 L1.5 5 M3.5 2.5 H14.5 M3.5 6.5 H13.5 M3.5 6.5 V10.5 M0.5 10.5 H15.5 M8.5 2.5 V16" fill="none" stroke="#6a8759" stroke-width="1"/></svg>
<svg style="left:808.75px;top:226.37px;" width="16" height="17" viewBox="0 0 16 17"><path d="M3.5 0.5 V4.5 M3.5 2.5 H6.5 M0.5 4.5 H7.5 M0.5 7.5 V15.5 H7.5 V7.5 M1.5 9 L4 12 L6.5 9 M4 7.5 V13 M11.5 0.5 L8 5 M11.5 0.5 L15.5 5 M10 6.5 H13.5 M9.5 9 H14.5 L12 12 M11.5 10 L13 16" fill="none" stroke="#6a8759" stroke-width="1"/></svg>
<span style="left:824.55px;top:227.16px;font-size:16.58px;color:#a9b7c6;font-family:'Liberation Mono',monospace;white-space:pre"><span style="color:#6a8759">'</span></span>
<span style="left:834.5px;top:227.16px;font-size:16.58px;color:#a9b7c6;font-family:'Liberation Mono',monospace;white-space:pre"><span style="color:#cc7832">,</span></span>
<span style="left:584.0px;top:253.45px;font-size:16.58px;color:#a9b7c6;font-family:'Liberation Mono',monospace;white-space:pre"><span style="color:#a9b7c6">    </span></span>
<span style="left:623.8px;top:253.45px;font-size:16.58px;color:#a9b7c6;font-family:'Liberation Mono',monospace;white-space:pre"><span style="color:#9876aa">sex </span></span>
<span style="left:663.6px;top:253.45px;font-size:16.58px;color:#a9b7c6;font-family:'Liberation Mono',monospace;white-space:pre"><span style="color:#cc7832">char</span></span>
<span style="left:703.4px;top:253.45px;font-size:16.58px;color:#a9b7c6;font-family:'Liberation Mono',monospace;white-space:pre"><span style="color:#a9b7c6">(</span></span>
<span style="left:713.35px;top:253.45px;font-size:16.58px;color:#a9b7c6;font-family:'Liberation Mono',monospace;white-space:pre"><span style="color:#6897bb">1</span></span>
<span style="left:723.3px;top:253.45px;font-size:16.58px;color:#a9b7c6;font-family:'Liberation Mono',monospace;white-space:pre"><span style="color:#a9b7c6">) </span></span>
<span style="left:743.2px;top:253.45px;font-size:16.58px;color:#a9b7c6;font-family:'Liberation Mono',monospace;white-space:pre"><span style="color:#cc7832">comment </span></span>
<span style="left:822.8px;top:253.45px;font-size:16.58px;color:#a9b7c6;font-family:'Liberation Mono',monospace;white-space:pre"><span style="color:#6a8759">'</span></span>
<svg style="left:832.75px;top:252.66px;" width="16" height="17" viewBox="0 0 16 17"><path d="M2.5 0.5 V16 M0.5 4 L1 7 M4 4 L5 6 M8 1 L6.5 6 M7 4.5 H15 M10.5 0.5 V15.5 M7.5 9.5 H14.5 M6 15.5 H15.5" fill="none" stroke="#6a8759" stroke-width="1"/></svg>
<svg style="left:848.55px;top:252.66px;" width="16" height="17" viewBox="0 0 16 17"><path d="M1.5 0.5 H8.5 V5.5 H1.5Z M0.5 8.5 H8.5 L8 15 L6.5 15.5 M4.5 6.5 L4 11 L0.5 15.5 M11.5 2 V11 M14.5 0.5 V15.5 L13 15" fill="none" stroke="#6a8759" stroke-width="1"/></svg>
<span style="left:864.35px;top:253.45px;font-size:16.58px;color:#a9b7c6;font-family:'Liberation Mono',monospace;white-space:pre"><span style="color:#6a8759">'</span></span>
<span style="left:584.0px;top:279.74px;font-size:16.58px;color:#a9b7c6;font-family:'Liberation Mono',monospace;white-space:pre"><span style="color:#a9b7c6">)</span></span>
<span style="left:593.95px;top:279.74px;font-size:16.58px;color:#a9b7c6;font-family:'Liberation Mono',monospace;white-space:pre"><span style="color:#cc7832">comment </span></span>
<span style="left:673.55px;top:279.74px;font-size:16.58px;color:#a9b7c6;font-family:'Liberation Mono',monospace;white-space:pre"><span style="color:#6a8759">'</span></span>
<svg style="left:683.5px;top:278.95px;" width="16" height="17" viewBox="0 0 16 17"><path d="M2.5 1.5 V10 L0.5 15.5 M2.5 1.5 H13.5 V15.5 L12 15.5 M2.5 6 H13.5 M2.5 10.5 H13.5 M8 1.5 V15.5" fill="none" stroke="#6a8759" stroke-width="1"/></svg>
<svg style="left:699.3px;top:278.95px;" width="16" height="17" viewBox="0 0 16 17"><path d="M7.5 0 L8.5 2 M3.5 3.5 H13.5 V8.5 H3.5 M3.5 3.5 V10 L1 15.5" fill="none" stroke="#6a8759" stroke-width="1"/></svg>
<svg style="left:715.1px;top:278.95px;" width="16" height="17" viewBox="0 0 16 17"><path d="M4 0.5 L0.5 7 M2.5 4 V16 M9 0.5 L10 2 M5.5 2.5 H15.5 M7 5.5 H14 M7 8 H14 M7.5 10.5 H13.5 V15.5 H7.5Z" fill="none" stroke="#6a8759" stroke-width="1"/></svg>
<svg style="left:730.9px;top:278.95px;" width="16" height="17" viewBox="0 0 16 17"><path d="M7.5 0 L6.5 1.5 M3.5 1.5 H12.5 V10.5 H3.5Z M3.5 4.5 H12.5 M3.5 7.5 H12.5 M1 13 L0.5 15 M4.5 11.5 V15.5 H12 V14 M7.5 11.5 L8.5 13 M13.5 12 L15 14.5" fill="none" stroke="#6a8759" stroke-width="1"/></svg>
<svg style="left:746.7px;top:278.95px;" width="16" height="17" viewBox="0 0 16 17"><path d="M1.5 2.5 H14.5 M2.5 5 H13.5 M0.5 7.5 H15.5 M8 0.5 V7.5 M7.5 7.5 L1 13 M5 10 V15.5 L8 14 M8 9 L15.5 15.5 M13 9.5 L10.5 11.5" fill="none" stroke="#6a8759" stroke-width="1"/></svg>
<span style="left:762.5px;top:279.74px;font-size:16.58px;color:#a9b7c6;font-family:'Liberation Mono',monospace;white-space:pre"><span style="color:#6a8759">'</span></span>
<span style="left:772.45px;top:279.74px;font-size:16.58px;color:#a9b7c6;font-family:'Liberation Mono',monospace;white-space:pre"><span style="color:#cc7832">;</span></span>
<div style="left:583px;top:326px;width:190px;height:26px;background:#214283;"></div>
<div style="left:583px;top:326px;width:181px;height:26px;background:transparent;border:1.5px solid #1d6e28;box-sizing:border-box"></div>
<span style="left:584.0px;top:332.32px;font-size:16.58px;color:#a9b7c6;font-family:'Liberation Mono',monospace;white-space:pre"><span style="color:#cc7832">select </span></span>
<span style="left:653.65px;top:332.32px;font-size:16.58px;color:#a9b7c6;font-family:'Liberation Mono',monospace;white-space:pre"><span style="color:#a9b7c6">* </span></span>
<span style="left:673.55px;top:332.32px;font-size:16.58px;color:#a9b7c6;font-family:'Liberation Mono',monospace;white-space:pre"><span style="color:#cc7832">from </span></span>
<span style="left:723.3px;top:332.32px;font-size:16.58px;color:#a9b7c6;font-family:'Liberation Mono',monospace;white-space:pre"><span style="color:#a9b7c6">test</span></span>
<span style="left:763.1px;top:332.32px;font-size:16.58px;color:#a9b7c6;font-family:'Liberation Mono',monospace;white-space:pre"><span style="color:#cc7832">;</span></span>
<svg style="left:593px;top:306px;" width="14" height="19" viewBox="0 0 14 19"><circle cx="7" cy="6.5" r="6.5" fill="#e7a92a"/><rect x="4" y="11" width="6" height="3" fill="#e7a92a"/><path d="M4 15.5 H10 M4.5 17.5 H9.5" stroke="#afb1b3" stroke-width="1.2"/></svg>
<svg style="left:1227px;top:151px;" width="15" height="13" viewBox="0 0 15 13"><path d="M1 6.5 L5.5 11 L14 2" fill="none" stroke="#559c47" stroke-width="2.6"/></svg>
<div style="left:1239px;top:176px;width:10px;height:121px;background:#4b4e50;"></div>
<div style="left:513px;top:365px;width:738px;height:31px;background:#323436;"></div>
<div style="left:513px;top:365px;width:738px;height:1px;background:#2d2f30;"></div>
<div style="left:28px;top:396px;width:1223px;height:1px;background:#323232;"></div>
<span style="left:36.6px;top:407.46px;font-size:15.4px;color:#bbbbbb;font-family:'Liberation Sans',sans-serif;">Services</span>
<svg style="left:1193px;top:404px;" width="18" height="18" viewBox="0 0 18 18"><circle cx="9" cy="9" r="5.92" fill="#afb1b3"/><rect x="7.1" y="1" width="3.8" height="8" rx="0.6" fill="#afb1b3" transform="rotate(0 9 9)"/><rect x="7.1" y="1" width="3.8" height="8" rx="0.6" fill="#afb1b3" transform="rotate(60 9 9)"/><rect x="7.1" y="1" width="3.8" height="8" rx="0.6" fill="#afb1b3" transform="rotate(120 9 9)"/><rect x="7.1" y="1" width="3.8" height="8" rx="0.6" fill="#afb1b3" transform="rotate(180 9 9)"/><rect x="7.1" y="1" width="3.8" height="8" rx="0.6" fill="#afb1b3" transform="rotate(240 9 9)"/><rect x="7.1" y="1" width="3.8" height="8" rx="0.6" fill="#afb1b3" transform="rotate(300 9 9)"/><circle cx="9" cy="9" r="2.56" fill="#3c3f41"/></svg>
<div style="left:1226px;top:412px;width:16px;height:2px;background:#afb1b3;"></div>
<div style="left:28px;top:429px;width:1223px;height:1px;background:#323232;"></div>
<div style="left:63px;top:430px;width:1px;height:275px;background:#323232;"></div>
<div style="left:420px;top:430px;width:1px;height:275px;background:#323232;"></div>
<div style="left:64px;top:463px;width:356px;height:1px;background:#323232;"></div>
<div style="left:421px;top:463px;width:830px;height:1px;background:#323232;"></div>
<div style="left:421px;top:499px;width:830px;height:1px;background:#323232;"></div>
<div style="left:421px;top:499px;width:830px;height:206px;background:#2b2b2b;"></div>
<span style="left:37px;top:441.46px;font-size:16px;color:#bbbbbb;font-family:'Liberation Sans',sans-serif;">Tx</span>
<svg style="left:50px;top:456px;" width="8" height="5" viewBox="0 0 8 5"><path d="M0 0 H7 L3.5 4Z" fill="#bbbbbb"/></svg>
<svg style="left:38px;top:474px;" width="17" height="14" viewBox="0 0 17 14"><path d="M1 7.5 L6 12.5 L16 1.5" fill="none" stroke="#5f6163" stroke-width="2.6"/></svg>
<svg style="left:38px;top:506px;" width="16" height="15" viewBox="0 0 16 15"><path d="M3 5 H10 A4.5 4.5 0 0 1 10 14 H5" fill="none" stroke="#5f6163" stroke-width="2"/><path d="M5 1 L1 5 L5 9" fill="none" stroke="#5f6163" stroke-width="2"/></svg>
<div style="left:35px;top:534px;width:22px;height:1px;background:#4b4e50;"></div>
<div style="left:39px;top:548px;width:13px;height:13px;background:#5f6163;"></div>
<div style="left:35px;top:576px;width:22px;height:1px;background:#4b4e50;"></div>
<svg style="left:38px;top:588px;" width="16" height="13" viewBox="0 0 16 13"><rect x="0" y="0" width="16" height="6" fill="#afb1b3"/><rect x="0" y="7" width="7" height="6" fill="#afb1b3"/><rect x="9" y="7" width="7" height="6" fill="#afb1b3"/><rect x="7.5" y="0" width="1" height="6" fill="#3c3f41"/></svg>
<svg style="left:73px;top:437px;" width="16" height="18" viewBox="0 0 16 18"><rect x="0" y="0" width="16" height="2" fill="#afb1b3"/><rect x="0" y="16" width="16" height="2" fill="#afb1b3"/><path d="M3.5 8.3 H12.5 L8 4.3Z M3.5 9.7 H12.5 L8 13.7Z" fill="#afb1b3"/></svg>
<svg style="left:106px;top:437px;" width="16" height="18" viewBox="0 0 16 18"><rect x="0" y="8" width="16" height="2" fill="#afb1b3"/><path d="M3 1 H13 L8 5.5Z M3 17 H13 L8 12.5Z" fill="#afb1b3"/></svg>
<div style="left:134px;top:437px;width:1px;height:22px;background:#515658;"></div>
<svg style="left:149px;top:440px;" width="18" height="19" viewBox="0 0 18 19"><rect x="0" y="0" width="5" height="5" fill="#afb1b3"/><rect x="6.5" y="0" width="5" height="5" fill="#afb1b3"/><rect x="0" y="6.5" width="5" height="5" fill="#afb1b3"/><rect x="6.5" y="6.5" width="5" height="5" fill="#afb1b3"/><path d="M10.5 14 H17.5 L14 18Z" fill="#afb1b3"/></svg>
<svg style="left:177px;top:437px;" width="20" height="18" viewBox="0 0 20 18"><path d="M0.8 17 Q2.5 16 2.5 13 V5 Q2.5 1 6 1 H14 Q17.5 1 17.5 5 V13 Q17.5 16 19.2 17" fill="none" stroke="#afb1b3" stroke-width="1.5"/><path d="M10 5 V14 M5.5 9.5 H14.5" stroke="#afb1b3" stroke-width="1.8"/></svg>
<div style="left:207px;top:437px;width:1px;height:22px;background:#515658;"></div>
<svg style="left:222px;top:439px;" width="20" height="19" viewBox="0 0 20 19"><path d="M7 1 V13 M1 7 H13" stroke="#afb1b3" stroke-width="2"/><path d="M12 13 H19 L15.5 17Z" fill="#afb1b3"/></svg>
<div style="left:65px;top:661px;width:355px;height:25px;background:#0d293e;"></div>
<svg style="left:73.0px;top:469px;" width="12" height="8" viewBox="0 0 12 8"><path d="M1 1.5 L6.0 6.5 L11 1.5" fill="none" stroke="#afb1b3" stroke-width="1.5"/></svg>
<svg style="left:96px;top:464px;" width="19" height="19" viewBox="0 0 19 19"><path d="M0.8 1.3 C4 1.6 7.5 3.5 9.5 6.5 C11 9 12 11.5 14.5 12.8 L17 14.5 M0.8 1.3 C2 4.5 3.5 6.5 3.5 9.5 L3.8 12.5 L5.3 11.2 L7.3 14.5 M17 14.5 L14.5 15.3 L17.5 18" fill="none" stroke="#0aa5e8" stroke-width="1.25" stroke-linecap="round" stroke-linejoin="round"/></svg>
<span style="left:119px;top:466.46px;font-size:16px;color:#bbbbbb;font-family:'Liberation Sans',sans-serif;">MySQL - @localhost</span>
<svg style="left:118px;top:492px;" width="19" height="17" viewBox="0 0 19 17"><path d="M3 3.5 Q0 4 0 7.5 Q0 11 3 11.5Z" fill="#8f9ba3"/><path d="M7 1 H12 V13.5 H7 Q3.5 13.5 3.5 7.25 Q3.5 1 7 1Z" fill="#8f9ba3"/><rect x="12.5" y="2.3" width="5.5" height="2.7" fill="#8f9ba3"/><rect x="12.5" y="9.5" width="5.5" height="2.7" fill="#8f9ba3"/><circle cx="16.8" cy="14.2" r="2.4" fill="#17e117"/></svg>
<span style="left:141px;top:491.46px;font-size:16px;color:#bbbbbb;font-family:'Liberation Sans',sans-serif;">default</span>
<span style="left:199px;top:491.46px;font-size:16px;color:#7b7d7f;font-family:'Liberation Sans',sans-serif;">152 ms</span>
<svg style="left:96.0px;top:519px;" width="12" height="8" viewBox="0 0 12 8"><path d="M1 1.5 L6.0 6.5 L11 1.5" fill="none" stroke="#afb1b3" stroke-width="1.5"/></svg>
<svg style="left:118px;top:517px;" width="19" height="17" viewBox="0 0 19 17"><path d="M3 3.5 Q0 4 0 7.5 Q0 11 3 11.5Z" fill="#8f9ba3"/><path d="M7 1 H12 V13.5 H7 Q3.5 13.5 3.5 7.25 Q3.5 1 7 1Z" fill="#8f9ba3"/><rect x="12.5" y="2.3" width="5.5" height="2.7" fill="#8f9ba3"/><rect x="12.5" y="9.5" width="5.5" height="2.7" fill="#8f9ba3"/><circle cx="16.8" cy="14.2" r="2.4" fill="#17e117"/></svg>
<span style="left:141px;top:516.46px;font-size:16px;color:#bbbbbb;font-family:'Liberation Sans',sans-serif;">console_2</span>
<span style="left:220.5px;top:516.46px;font-size:16px;color:#7b7d7f;font-family:'Liberation Sans',sans-serif;">50 ms</span>
<svg style="left:142px;top:538px;" width="19" height="19" viewBox="0 0 19 19"><path d="M0.8 1.3 C4 1.6 7.5 3.5 9.5 6.5 C11 9 12 11.5 14.5 12.8 L17 14.5 M0.8 1.3 C2 4.5 3.5 6.5 3.5 9.5 L3.8 12.5 L5.3 11.2 L7.3 14.5 M17 14.5 L14.5 15.3 L17.5 18" fill="none" stroke="#0aa5e8" stroke-width="1.25" stroke-linecap="round" stroke-linejoin="round"/></svg>
<span style="left:165px;top:541.46px;font-size:16px;color:#bbbbbb;font-family:'Liberation Sans',sans-serif;">console_2</span>
<span style="left:244.5px;top:541.46px;font-size:16px;color:#7b7d7f;font-family:'Liberation Sans',sans-serif;">50 ms</span>
<svg style="left:118px;top:567px;" width="19" height="17" viewBox="0 0 19 17"><path d="M3 3.5 Q0 4 0 7.5 Q0 11 3 11.5Z" fill="#8f9ba3"/><path d="M7 1 H12 V13.5 H7 Q3.5 13.5 3.5 7.25 Q3.5 1 7 1Z" fill="#8f9ba3"/><rect x="12.5" y="2.3" width="5.5" height="2.7" fill="#8f9ba3"/><rect x="12.5" y="9.5" width="5.5" height="2.7" fill="#8f9ba3"/></svg>
<span style="left:141px;top:566.46px;font-size:16px;color:#bbbbbb;font-family:'Liberation Sans',sans-serif;">console_1</span>
<svg style="left:96.0px;top:594px;" width="12" height="8" viewBox="0 0 12 8"><path d="M1 1.5 L6.0 6.5 L11 1.5" fill="none" stroke="#afb1b3" stroke-width="1.5"/></svg>
<svg style="left:118px;top:592px;" width="19" height="17" viewBox="0 0 19 17"><path d="M3 3.5 Q0 4 0 7.5 Q0 11 3 11.5Z" fill="#8f9ba3"/><path d="M7 1 H12 V13.5 H7 Q3.5 13.5 3.5 7.25 Q3.5 1 7 1Z" fill="#8f9ba3"/><rect x="12.5" y="2.3" width="5.5" height="2.7" fill="#8f9ba3"/><rect x="12.5" y="9.5" width="5.5" height="2.7" fill="#8f9ba3"/><circle cx="16.8" cy="14.2" r="2.4" fill="#17e117"/></svg>
<span style="left:141px;top:591.46px;font-size:16px;color:#bbbbbb;font-family:'Liberation Sans',sans-serif;">console_3</span>
<span style="left:220.5px;top:591.46px;font-size:16px;color:#7b7d7f;font-family:'Liberation Sans',sans-serif;">123 ms</span>
<svg style="left:142px;top:613px;" width="19" height="19" viewBox="0 0 19 19"><path d="M0.8 1.3 C4 1.6 7.5 3.5 9.5 6.5 C11 9 12 11.5 14.5 12.8 L17 14.5 M0.8 1.3 C2 4.5 3.5 6.5 3.5 9.5 L3.8 12.5 L5.3 11.2 L7.3 14.5 M17 14.5 L14.5 15.3 L17.5 18" fill="none" stroke="#0aa5e8" stroke-width="1.25" stroke-linecap="round" stroke-linejoin="round"/></svg>
<span style="left:165px;top:616.46px;font-size:16px;color:#bbbbbb;font-family:'Liberation Sans',sans-serif;">console_3</span>
<span style="left:244.5px;top:616.46px;font-size:16px;color:#7b7d7f;font-family:'Liberation Sans',sans-serif;">123 ms</span>
<svg style="left:96.0px;top:644px;" width="12" height="8" viewBox="0 0 12 8"><path d="M1 1.5 L6.0 6.5 L11 1.5" fill="none" stroke="#afb1b3" stroke-width="1.5"/></svg>
<svg style="left:118px;top:642px;" width="19" height="17" viewBox="0 0 19 17"><path d="M3 3.5 Q0 4 0 7.5 Q0 11 3 11.5Z" fill="#8f9ba3"/><path d="M7 1 H12 V13.5 H7 Q3.5 13.5 3.5 7.25 Q3.5 1 7 1Z" fill="#8f9ba3"/><rect x="12.5" y="2.3" width="5.5" height="2.7" fill="#8f9ba3"/><rect x="12.5" y="9.5" width="5.5" height="2.7" fill="#8f9ba3"/><circle cx="16.8" cy="14.2" r="2.4" fill="#17e117"/></svg>
<span style="left:141px;top:641.46px;font-size:16px;color:#bbbbbb;font-family:'Liberation Sans',sans-serif;">console_4</span>
<span style="left:220.5px;top:641.46px;font-size:16px;color:#7b7d7f;font-family:'Liberation Sans',sans-serif;">58 ms</span>
<svg style="left:142px;top:663px;" width="19" height="19" viewBox="0 0 19 19"><path d="M0.8 1.3 C4 1.6 7.5 3.5 9.5 6.5 C11 9 12 11.5 14.5 12.8 L17 14.5 M0.8 1.3 C2 4.5 3.5 6.5 3.5 9.5 L3.8 12.5 L5.3 11.2 L7.3 14.5 M17 14.5 L14.5 15.3 L17.5 18" fill="none" stroke="#0aa5e8" stroke-width="1.25" stroke-linecap="round" stroke-linejoin="round"/></svg>
<span style="left:165px;top:666.46px;font-size:16px;color:#bbbbbb;font-family:'Liberation Sans',sans-serif;">console_4</span>
<span style="left:244.5px;top:666.46px;font-size:16px;color:#7b7d7f;font-family:'Liberation Sans',sans-serif;">58 ms</span>
<svg style="left:96.0px;top:694px;" width="12" height="8" viewBox="0 0 12 8"><path d="M1 1.5 L6.0 6.5 L11 1.5" fill="none" stroke="#afb1b3" stroke-width="1.5"/></svg>
<svg style="left:118px;top:692px;" width="19" height="17" viewBox="0 0 19 17"><path d="M3 3.5 Q0 4 0 7.5 Q0 11 3 11.5Z" fill="#8f9ba3"/><path d="M7 1 H12 V13.5 H7 Q3.5 13.5 3.5 7.25 Q3.5 1 7 1Z" fill="#8f9ba3"/><rect x="12.5" y="2.3" width="5.5" height="2.7" fill="#8f9ba3"/><rect x="12.5" y="9.5" width="5.5" height="2.7" fill="#8f9ba3"/></svg>
<span style="left:141px;top:691.46px;font-size:16px;color:#bbbbbb;font-family:'Liberation Sans',sans-serif;">console</span>
<div style="left:408px;top:470px;width:10px;height:205px;background:rgba(128,132,136,0.28);"></div>
<div style="left:64px;top:705px;width:356px;height:1px;background:#323232;"></div>
<svg style="left:438px;top:440px;" width="17" height="13" viewBox="0 0 17 13"><rect x="0" y="0" width="17" height="13" fill="#afb1b3"/><path d="M5 3 L9 6.5 L5 10" fill="none" stroke="#3c3f41" stroke-width="1.8"/></svg>
<span style="left:461px;top:439.10px;font-size:15px;color:#bbbbbb;font-family:'Liberation Sans',sans-serif;">Output</span>
<svg style="left:532px;top:438px;" width="18" height="16" viewBox="0 0 18 16"><rect x="0" y="0" width="18" height="16" fill="#afb1b3"/><path d="M1 4.5 H17 M1 8.5 H17 M1 12.5 H17 M6.5 4 V15 M11.5 4 V15" stroke="#3c3f41" stroke-width="1.2"/></svg>
<span style="left:556px;top:439.95px;font-size:14px;color:#bbbbbb;font-family:'Liberation Sans',sans-serif;">item.test</span>
<svg style="left:620px;top:441px;" width="10" height="10" viewBox="0 0 10 10"><path d="M1 1 L9 9 M9 1 L1 9" stroke="#6e7072" stroke-width="1.3"/></svg>
<div style="left:516px;top:461px;width:127px;height:2px;background:#8d9194;"></div>
<svg style="left:435px;top:474px;" width="13" height="15" viewBox="0 0 13 15"><path d="M1 0 V15" stroke="#5f6163" stroke-width="1.5"/><path d="M12 1 L5 7.5 L12 14" fill="none" stroke="#5f6163" stroke-width="1.5"/></svg>
<svg style="left:468px;top:474px;" width="9" height="15" viewBox="0 0 9 15"><path d="M8 1 L1.5 7.5 L8 14" fill="none" stroke="#5f6163" stroke-width="1.5"/></svg>
<span style="left:496px;top:476.15px;font-size:14px;color:#bbbbbb;font-family:'Liberation Sans',sans-serif;">0 rows</span>
<svg style="left:543.0px;top:478px;" width="10" height="8" viewBox="0 0 10 8"><path d="M1 1.5 L5.0 6.5 L9 1.5" fill="none" stroke="#7e8083" stroke-width="1.5"/></svg>
<svg style="left:571px;top:474px;" width="9" height="15" viewBox="0 0 9 15"><path d="M1 1 L7.5 7.5 L1 14" fill="none" stroke="#5f6163" stroke-width="1.5"/></svg>
<svg style="left:600px;top:474px;" width="14" height="15" viewBox="0 0 14 15"><path d="M1 1 L8 7.5 L1 14" fill="none" stroke="#5f6163" stroke-width="1.5"/><path d="M12.5 0 V15" stroke="#5f6163" stroke-width="1.5"/></svg>
<div style="left:627px;top:471px;width:1px;height:23px;background:#515658;"></div>
<svg style="left:641px;top:474px;" width="17" height="17" viewBox="0 0 17 17"><path d="M15.2 8 A6.8 6.6 0 0 0 4.2 3.6 M1.8 9.2 A6.8 6.6 0 0 0 12.8 13.4" fill="none" stroke="#afb1b3" stroke-width="2.2"/><path d="M1 1.2 V8 H7.8Z M16.5 16.3 V9.2 H9.7Z" fill="#afb1b3"/></svg>
<div style="left:669px;top:471px;width:1px;height:23px;background:#515658;"></div>
<svg style="left:683px;top:475px;" width="14" height="14" viewBox="0 0 14 14"><path d="M7 0 V14 M0 7 H14" stroke="#afb1b3" stroke-width="2"/></svg>
<div style="left:715px;top:481px;width:13px;height:2px;background:#5f6163;"></div>
<div style="left:742px;top:471px;width:1px;height:23px;background:#515658;"></div>
<span style="left:757px;top:476.15px;font-size:14px;color:#bbbbbb;font-family:'Liberation Sans',sans-serif;">Tx: Auto</span>
<svg style="left:815.5px;top:478px;" width="11" height="8" viewBox="0 0 11 8"><path d="M1 1.5 L5.5 6.5 L10 1.5" fill="none" stroke="#7e8083" stroke-width="1.5"/></svg>
<svg style="left:843px;top:472px;" width="16" height="18" viewBox="0 0 16 18"><text x="0.5" y="7" font-size="7.5" font-family="Liberation Sans" fill="#5f6163">DB</text><path d="M8 8 L13 12.5 H10 V17 H6 V12.5 H3Z" fill="#5f6163"/></svg>
<svg style="left:876px;top:474px;" width="18" height="15" viewBox="0 0 18 15"><path d="M1 7.5 L6 12.5 L17 1.5" fill="none" stroke="#5f6163" stroke-width="2.6"/></svg>
<svg style="left:933px;top:477px;" width="11" height="9" viewBox="0 0 11 9"><path d="M1 1 L4.5 4.5 L1 8 M6 1 L9.5 4.5 L6 8" fill="none" stroke="#afb1b3" stroke-width="1.2"/></svg>
<span style="left:961px;top:476.57px;font-size:13.5px;color:#bbbbbb;font-family:'Liberation Sans',sans-serif;">Comma-...d (CSV)</span>
<svg style="left:1082.5px;top:478px;" width="11" height="8" viewBox="0 0 11 8"><path d="M1 1.5 L5.5 6.5 L10 1.5" fill="none" stroke="#7e8083" stroke-width="1.5"/></svg>
<div style="left:1105px;top:471px;width:1px;height:23px;background:#515658;"></div>
<svg style="left:1118px;top:474px;" width="16" height="17" viewBox="0 0 16 17"><path d="M8 0 V10 M3.5 6 L8 10.5 L12.5 6" fill="none" stroke="#5f6163" stroke-width="2"/><rect x="0" y="14" width="16" height="2" fill="#5f6163"/></svg>
<svg style="left:1151px;top:472px;" width="16" height="18" viewBox="0 0 16 18"><rect x="0" y="0" width="16" height="2" fill="#afb1b3"/><path d="M8 17 V5 M3.5 9 L8 4.5 L12.5 9" fill="none" stroke="#afb1b3" stroke-width="2"/></svg>
<div style="left:1180px;top:471px;width:1px;height:23px;background:#515658;"></div>
<svg style="left:1190px;top:472px;" width="23" height="21" viewBox="0 0 23 21"><path d="M0.5 9 Q10 -2 19.5 9 Q10 20 0.5 9Z" fill="#afb1b3"/><circle cx="10" cy="9" r="4.2" fill="#3c3f41"/><circle cx="10" cy="9" r="2.3" fill="#afb1b3"/><path d="M15 16 H22 L18.5 19.5Z" fill="#afb1b3"/></svg>
<svg style="left:1223px;top:472px;" width="18" height="18" viewBox="0 0 18 18"><circle cx="9" cy="9" r="5.92" fill="#afb1b3"/><rect x="7.1" y="1" width="3.8" height="8" rx="0.6" fill="#afb1b3" transform="rotate(0 9 9)"/><rect x="7.1" y="1" width="3.8" height="8" rx="0.6" fill="#afb1b3" transform="rotate(60 9 9)"/><rect x="7.1" y="1" width="3.8" height="8" rx="0.6" fill="#afb1b3" transform="rotate(120 9 9)"/><rect x="7.1" y="1" width="3.8" height="8" rx="0.6" fill="#afb1b3" transform="rotate(180 9 9)"/><rect x="7.1" y="1" width="3.8" height="8" rx="0.6" fill="#afb1b3" transform="rotate(240 9 9)"/><rect x="7.1" y="1" width="3.8" height="8" rx="0.6" fill="#afb1b3" transform="rotate(300 9 9)"/><circle cx="9" cy="9" r="2.56" fill="#3c3f41"/></svg>
<svg style="left:1235px;top:489px;" width="8" height="5" viewBox="0 0 8 5"><path d="M0 0 H7 L3.5 4Z" fill="#afb1b3"/></svg>
<div style="left:421px;top:499px;width:490px;height:32px;background:#3a3a3a;"></div>
<div style="left:675px;top:499px;width:1px;height:32px;background:#333333;"></div>
<div style="left:545px;top:499px;width:1px;height:32px;background:#333333;"></div>
<div style="left:792px;top:499px;width:1px;height:32px;background:#333333;"></div>
<svg style="left:472px;top:507px;" width="18" height="16" viewBox="0 0 18 16"><rect x="0" y="0" width="6.1" height="15.4" fill="#97a3ab"/><rect x="7.9" y="0" width="9.9" height="15.4" fill="#97a3ab"/><rect x="7.6" y="4.3" width="3.6" height="2.1" fill="#3c3f41"/><rect x="13" y="4.3" width="3.4" height="2.1" fill="#3c3f41"/><rect x="7.6" y="8.1" width="3.6" height="2.1" fill="#3c3f41"/><rect x="13" y="8.1" width="3.4" height="2.1" fill="#3c3f41"/><rect x="7.6" y="12" width="3.6" height="2.1" fill="#3c3f41"/><rect x="13" y="12" width="3.4" height="2.1" fill="#3c3f41"/></svg>
<span style="left:497px;top:508.29px;font-size:16.58px;color:#a9b7c6;font-family:'Liberation Mono',monospace;">id</span>
<svg style="left:527px;top:509px;" width="8" height="13" viewBox="0 0 8 13"><path d="M0.5 5 L4 1 L7.5 5Z M0.5 8 L4 12 L7.5 8Z" fill="#9a9a9a"/></svg>
<svg style="left:551px;top:507px;" width="18" height="16" viewBox="0 0 18 16"><rect x="0" y="0" width="6.1" height="15.4" fill="#97a3ab"/><rect x="7.9" y="0" width="9.9" height="15.4" fill="#97a3ab"/><rect x="7.6" y="4.3" width="3.6" height="2.1" fill="#3c3f41"/><rect x="13" y="4.3" width="3.4" height="2.1" fill="#3c3f41"/><rect x="7.6" y="8.1" width="3.6" height="2.1" fill="#3c3f41"/><rect x="13" y="8.1" width="3.4" height="2.1" fill="#3c3f41"/><rect x="7.6" y="12" width="3.6" height="2.1" fill="#3c3f41"/><rect x="13" y="12" width="3.4" height="2.1" fill="#3c3f41"/></svg>
<span style="left:576px;top:508.29px;font-size:16.58px;color:#a9b7c6;font-family:'Liberation Mono',monospace;">name</span>
<svg style="left:657px;top:509px;" width="8" height="13" viewBox="0 0 8 13"><path d="M0.5 5 L4 1 L7.5 5Z M0.5 8 L4 12 L7.5 8Z" fill="#9a9a9a"/></svg>
<svg style="left:710px;top:507px;" width="18" height="16" viewBox="0 0 18 16"><rect x="0" y="0" width="6.1" height="15.4" fill="#97a3ab"/><rect x="7.9" y="0" width="9.9" height="15.4" fill="#97a3ab"/><rect x="7.6" y="4.3" width="3.6" height="2.1" fill="#3c3f41"/><rect x="13" y="4.3" width="3.4" height="2.1" fill="#3c3f41"/><rect x="7.6" y="8.1" width="3.6" height="2.1" fill="#3c3f41"/><rect x="13" y="8.1" width="3.4" height="2.1" fill="#3c3f41"/><rect x="7.6" y="12" width="3.6" height="2.1" fill="#3c3f41"/><rect x="13" y="12" width="3.4" height="2.1" fill="#3c3f41"/></svg>
<span style="left:735px;top:508.29px;font-size:16.58px;color:#a9b7c6;font-family:'Liberation Mono',monospace;">age</span>
<svg style="left:776px;top:509px;" width="8" height="13" viewBox="0 0 8 13"><path d="M0.5 5 L4 1 L7.5 5Z M0.5 8 L4 12 L7.5 8Z" fill="#9a9a9a"/></svg>
<svg style="left:797px;top:507px;" width="18" height="16" viewBox="0 0 18 16"><rect x="0" y="0" width="6.1" height="15.4" fill="#97a3ab"/><rect x="7.9" y="0" width="9.9" height="15.4" fill="#97a3ab"/><rect x="7.6" y="4.3" width="3.6" height="2.1" fill="#3c3f41"/><rect x="13" y="4.3" width="3.4" height="2.1" fill="#3c3f41"/><rect x="7.6" y="8.1" width="3.6" height="2.1" fill="#3c3f41"/><rect x="13" y="8.1" width="3.4" height="2.1" fill="#3c3f41"/><rect x="7.6" y="12" width="3.6" height="2.1" fill="#3c3f41"/><rect x="13" y="12" width="3.4" height="2.1" fill="#3c3f41"/></svg>
<span style="left:822px;top:508.29px;font-size:16.58px;color:#a9b7c6;font-family:'Liberation Mono',monospace;">sex</span>
<svg style="left:893px;top:509px;" width="8" height="13" viewBox="0 0 8 13"><path d="M0.5 5 L4 1 L7.5 5Z M0.5 8 L4 12 L7.5 8Z" fill="#9a9a9a"/></svg>
<div style="left:0px;top:705px;width:1279px;height:1px;background:#323232;"></div>
<div style="left:0px;top:732px;width:1279px;height:1px;background:#45484a;"></div>
<svg style="left:44px;top:713px;" width="15" height="15" viewBox="0 0 15 15"><circle cx="7.5" cy="7.5" r="7.2" fill="#afb1b3"/><rect x="6.3" y="3" width="2.4" height="6" fill="#3c3f41"/><rect x="6.3" y="10.3" width="2.4" height="2.3" fill="#3c3f41"/></svg>
<span style="left:64px;top:714.57px;font-size:13.5px;color:#bbbbbb;font-family:'Liberation Sans',sans-serif;"><u>6</u>: Problems</span>
<svg style="left:163px;top:714px;" width="14" height="12" viewBox="0 0 14 12"><path d="M0 1 H2 M4 1 H14 M0 6 H2 M4 6 H14 M0 11 H2 M4 11 H14" stroke="#afb1b3" stroke-width="1.8"/></svg>
<span style="left:182.5px;top:714.57px;font-size:13.5px;color:#bbbbbb;font-family:'Liberation Sans',sans-serif;">TODO</span>
<div style="left:232px;top:706px;width:112px;height:26px;background:#2e3032;"></div>
<svg style="left:246px;top:713px;" width="16" height="15" viewBox="0 0 16 15"><path d="M0.5 7.5 L4 1 H12 L15.5 7.5 L12 14 H4Z" fill="#afb1b3"/><path d="M6 4.3 L11 7.5 L6 10.7Z" fill="#2e3032"/></svg>
<span style="left:267px;top:714.57px;font-size:13.5px;color:#e4e4e4;font-family:'Liberation Sans',sans-serif;"><u>8</u>: Services</span>
<svg style="left:1156px;top:712px;" width="18" height="18" viewBox="0 0 18 18"><circle cx="9" cy="9" r="8.5" fill="#499c54"/><text x="5.5" y="13.5" font-size="12" font-weight="bold" font-family="Liberation Sans" fill="#fff">1</text></svg>
<span style="left:1177px;top:714.57px;font-size:13.5px;color:#bbbbbb;font-family:'Liberation Sans',sans-serif;">Event Log</span>
<svg style="left:8px;top:737px;" width="16" height="16" viewBox="0 0 16 16"><path d="M1 4 V15 H12" fill="none" stroke="#afb1b3" stroke-width="1.4"/><rect x="4" y="1" width="11" height="11" fill="none" stroke="#afb1b3" stroke-width="1.4"/></svg>
<span style="left:35.5px;top:737.76px;font-size:16px;color:#bbbbbb;font-family:'Liberation Sans',sans-serif;">Connected (2 minutes ago)</span>
<span style="left:945px;top:738.60px;font-size:15px;color:#a8a8a8;font-family:'Liberation Sans',sans-serif;">19 chars</span>
<span style="left:1026px;top:738.60px;font-size:15px;color:#a8a8a8;font-family:'Liberation Sans',sans-serif;">8:1</span>
<span style="left:1061px;top:738.60px;font-size:15px;color:#a8a8a8;font-family:'Liberation Sans',sans-serif;">CRLF</span>
<span style="left:1115px;top:738.60px;font-size:15px;color:#a8a8a8;font-family:'Liberation Sans',sans-serif;">UTF-8</span>
<span style="left:1176px;top:738.60px;font-size:15px;color:#a8a8a8;font-family:'Liberation Sans',sans-serif;">4 spaces</span>
<div style="left:1251px;top:744px;width:10px;height:9px;background:#8c8c8c;"></div>
<span style="left:1031px;top:731.58px;font-size:19.4px;color:rgba(220,220,220,0.7);font-family:'Liberation Sans',sans-serif;text-shadow:1px 1px 2px rgba(0,0,0,0.45)">CSDN @weixin_43294936</span>
</body></html>
